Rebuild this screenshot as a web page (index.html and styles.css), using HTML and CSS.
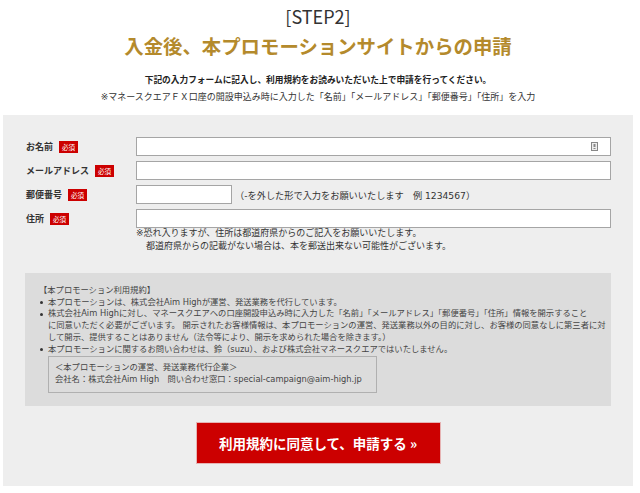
FILE: index.html
```html
<!DOCTYPE html>
<html lang="ja">
<head>
  <meta charset="UTF-8">
  <title>STEP2 申請フォーム</title>
  <link rel="stylesheet" href="styles.css">
</head>
<body>
  <div class="page">

    <!-- 見出し -->
    <div class="head">
      <p class="step">[STEP2]</p>
      <h1>入金後、本プロモーションサイトからの申請</h1>
      <p class="lead">下記の入力フォームに記入し、利用規約をお読みいただいた上で申請を行ってください。</p>
      <p class="note">※マネースクエアＦＸ口座の開設申込み時に入力した「名前」「メールアドレス」「郵便番号」「住所」を入力</p>
    </div>

    <!-- フォーム -->
    <div class="panel">
      <div class="row">
        <label class="label">お名前<span class="req">必須</span></label>
        <div class="field">
          <input type="text" class="input">
          <svg class="autofill" width="7" height="9" viewBox="0 0 7 9">
            <rect x="0.5" y="0.5" width="6" height="8" fill="#eee" stroke="#888"/>
            <rect x="2.5" y="2" width="2" height="3" fill="#888"/>
            <rect x="2.5" y="6" width="2" height="1" fill="#888"/>
          </svg>
        </div>
      </div>
      <div class="row">
        <label class="label">メールアドレス<span class="req">必須</span></label>
        <div class="field"><input type="text" class="input"></div>
      </div>
      <div class="row">
        <label class="label">郵便番号<span class="req">必須</span></label>
        <div class="field">
          <input type="text" class="input zip">
          <span class="hint">（-を外した形で入力をお願いいたします　例 1234567）</span>
        </div>
      </div>
      <div class="row">
        <label class="label">住所<span class="req">必須</span></label>
        <div class="field"><input type="text" class="input"></div>
      </div>
      <p class="addr-note">※恐れ入りますが、住所は都道府県からのご記入をお願いいたします。<br><span class="indent">都道府県からの記載がない場合は、本を郵送出来ない可能性がございます。</span></p>

      <!-- 利用規約 -->
      <div class="terms">
        <p>【本プロモーション利用規約】</p>
        <ul>
          <li>本プロモーションは、株式会社Aim Highが運営、発送業務を代行しています。</li>
          <li>株式会社Aim Highに対し、マネースクエアへの口座開設申込み時に入力した「名前」「メールアドレス」「郵便番号」「住所」情報を開示すること<br>に同意いただく必要がございます。 開示されたお客様情報は、本プロモーションの運営、発送業務以外の目的に対し、お客様の同意なしに第三者に対<br>して開示、提供することはありません（法令等により、開示を求められた場合を除きます。）</li>
          <li>本プロモーションに関するお問い合わせは、鈴（suzu）、および株式会社マネースクエアではいたしません。</li>
        </ul>
        <div class="company">
          <p>＜本プロモーションの運営、発送業務代行企業＞</p>
          <p>会社名：株式会社Aim High　問い合わせ窓口：special-campaign@aim-high.jp</p>
        </div>
      </div>

      <div class="submit">
        <button class="btn">利用規約に同意して、申請する &raquo;</button>
      </div>
    </div>

  </div>
</body>
</html>
```

FILE: styles.css
```css
body {
  margin: 0;
  background: #fff;
  font-family: "DejaVu Sans", "Noto Sans CJK JP", sans-serif;
  color: #333;
}

p {
  margin: 0;
}

.page {
  width: 630px;
  margin-left: 3px;
}

.head {
  text-align: center;
}

.step {
  margin-top: 4px;
  font-family: "Noto Sans CJK JP", sans-serif;
  font-size: 18px;
  line-height: 24px;
  color: #333;
}

h1 {
  margin: 4px 0 0;
  font-family: "Noto Sans CJK JP", sans-serif;
  font-size: 19.4px;
  line-height: 28px;
  font-weight: bold;
  color: #b48a2c;
}

.lead {
  margin-top: 12px;
  font-size: 8.7px;
  line-height: 17px;
  font-weight: bold;
  color: #222;
}

.note {
  font-size: 9px;
  line-height: 17px;
}

.panel {
  margin-top: 9px;
  background: #eee;
  padding: 22px 22px 22px;
}

.row {
  display: flex;
  align-items: center;
  height: 19px;
  margin-bottom: 5px;
}

.label {
  width: 110px;
  padding-left: 1px;
  font-family: "Noto Sans CJK JP", sans-serif;
  font-size: 9px;
  font-weight: bold;
  color: #333;
  display: flex;
  align-items: center;
}

.req {
  display: inline-block;
  margin-left: 6px;
  background: #cc0000;
  color: #fff;
  font-size: 6.5px;
  font-weight: normal;
  line-height: 12px;
  padding: 0 3px;
}

.field {
  flex: 1;
  display: flex;
  align-items: center;
  position: relative;
}

.input {
  box-sizing: border-box;
  width: 100%;
  height: 19px;
  margin: 0;
  border: 1px solid #a5a5a5;
  background: #fff;
  padding: 0 4px;
}

.input.zip {
  width: 96px;
}

.autofill {
  position: absolute;
  right: 13px;
  top: 5px;
}

.hint {
  margin-left: 3px;
  font-size: 9.2px;
  color: #333;
}

.addr-note {
  margin: -6px 0 0 111px;
  font-size: 9px;
  line-height: 12.5px;
}

.addr-note .indent {
  padding-left: 10px;
}

.terms {
  margin-top: 21px;
  background: #dcdcdc;
  padding: 12px 14px 13px;
  font-size: 8.3px;
  line-height: 11.7px;
  color: #444;
}

.terms ul {
  margin: 0;
  padding: 0;
  list-style: none;
}

.terms li {
  position: relative;
  padding-left: 9px;
  white-space: nowrap;
}

.terms li::before {
  content: "";
  position: absolute;
  left: 1px;
  top: 4.5px;
  width: 3px;
  height: 3px;
  border-radius: 50%;
  background: #333;
}

.company {
  margin: 1px 0 0 9px;
  width: 329px;
  box-sizing: border-box;
  border: 1px solid #b0b0b0;
  padding: 5px 6px 6px;
}

.submit {
  margin-top: 16px;
  display: flex;
  justify-content: center;
}

.btn {
  width: 245px;
  height: 42px;
  background: #cc0000;
  color: #fff;
  border: 1px solid #e6b3b3;
  font-family: "Noto Sans CJK JP", sans-serif;
  font-size: 13.5px;
  font-weight: bold;
  cursor: pointer;
}
```
